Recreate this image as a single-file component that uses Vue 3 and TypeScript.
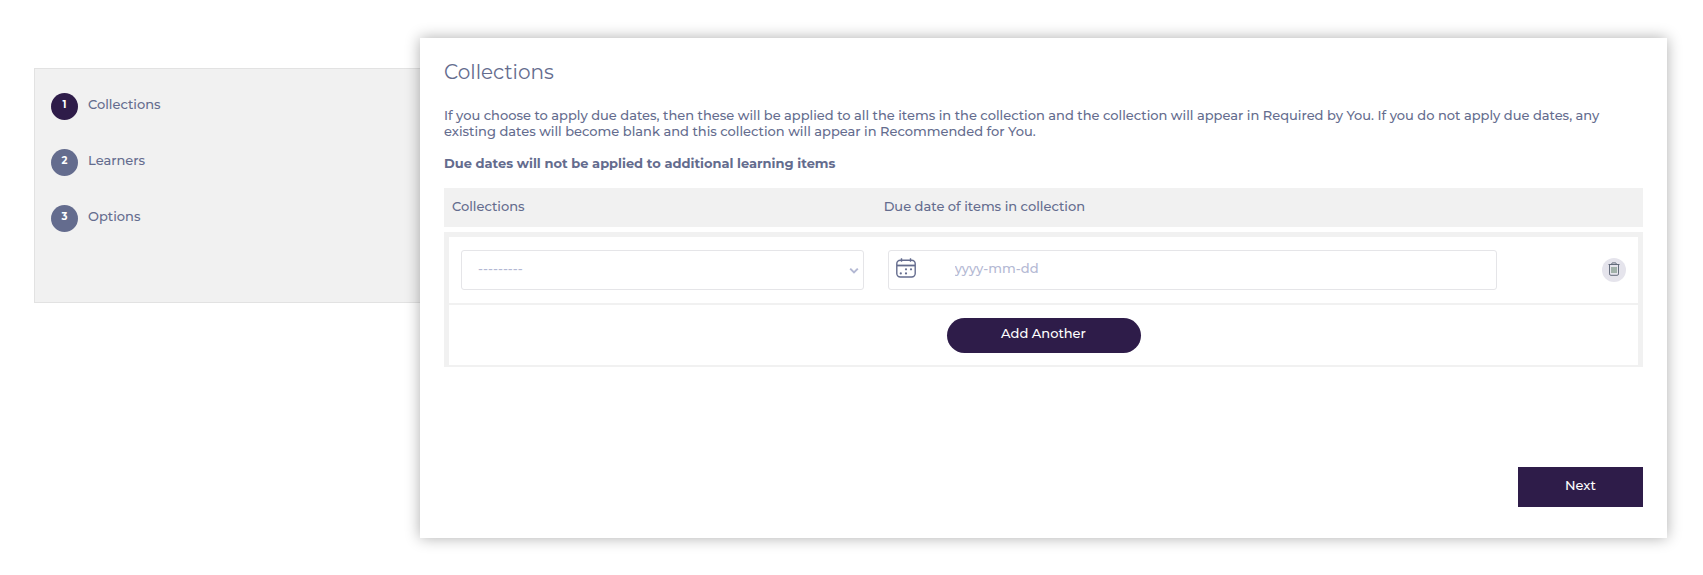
<script setup lang="ts">
import { ref } from 'vue'

interface Step {
  number: number
  label: string
}

interface CollectionRow {
  id: number
  collection: string
  dueDate: string
}

const steps: Step[] = [
  { number: 1, label: 'Collections' },
  { number: 2, label: 'Learners' },
  { number: 3, label: 'Options' },
]

const currentStep = ref(1)
const rows = ref<CollectionRow[]>([{ id: 1, collection: '', dueDate: '' }])
let nextId = 2

function addRow(): void {
  rows.value.push({ id: nextId++, collection: '', dueDate: '' })
}

function removeRow(id: number): void {
  rows.value = rows.value.filter((row) => row.id !== id)
}

function goNext(): void {
  currentStep.value = Math.min(currentStep.value + 1, steps.length)
}
</script>

<template>
  <div class="wizard">
    <nav class="steps" aria-label="Steps">
      <ol class="step-list">
        <li
          v-for="step in steps"
          :key="step.number"
          class="step"
          :class="{ active: step.number === currentStep }"
        >
          <span class="step-number">{{ step.number }}</span>
          <span class="step-label">{{ step.label }}</span>
        </li>
      </ol>
    </nav>

    <main class="panel">
      <h1 class="title">Collections</h1>
      <p class="intro">
        If you choose to apply due dates, then these will be applied to all the items in the
        collection and the collection will appear in Required by You. If you do not apply due
        dates, any existing dates will become blank and this collection will appear in Recommended
        for You.
      </p>
      <p class="note">Due dates will not be applied to additional learning items</p>

      <table class="collections">
        <thead>
          <tr>
            <th class="col-collection" scope="col">Collections</th>
            <th scope="col">Due date of items in collection</th>
            <td class="col-action"></td>
          </tr>
        </thead>
        <tbody>
          <tr v-for="row in rows" :key="row.id" class="entry">
            <td>
              <div class="field">
                <select v-model="row.collection" class="control" aria-label="Collection">
                  <option value="">---------</option>
                </select>
                <svg class="chevron" viewBox="0 0 10 8" aria-hidden="true">
                  <path d="M1.2 1.6 5 5.4 8.8 1.6" />
                </svg>
              </div>
            </td>
            <td>
              <div class="field">
                <input
                  v-model="row.dueDate"
                  class="control date"
                  type="text"
                  placeholder="yyyy-mm-dd"
                  aria-label="Due date"
                />
                <svg class="calendar" viewBox="0 0 20 20" aria-hidden="true">
                  <rect x="0.8" y="2.3" width="18.4" height="16.7" rx="3.5" />
                  <path class="bar" d="M1 7.5h18" />
                  <path d="M5.5 0.3v3.4M14.5 0.3v3.4" />
                  <g class="dots">
                    <circle cx="10" cy="11.3" r="1.1" />
                    <circle cx="15" cy="11.3" r="1.1" />
                    <circle cx="4.8" cy="15.4" r="1.1" />
                    <circle cx="10" cy="15.4" r="1.1" />
                  </g>
                </svg>
              </div>
            </td>
            <td class="action">
              <button class="remove" type="button" aria-label="Remove" @click="removeRow(row.id)">
                <svg viewBox="0 0 12 14" aria-hidden="true">
                  <path d="M0.5 2.5h11M3.5 2.3 4.2 0.9h3.6l0.7 1.4" />
                  <path d="M1.5 2.7v9.2q0 1.4 1.4 1.4h6.2q1.4 0 1.4-1.4V2.7" />
                  <path class="slats" d="M4 5v6M6 5v6M8 5v6" />
                </svg>
              </button>
            </td>
          </tr>
          <tr class="footer-row">
            <td colspan="3">
              <button class="add" type="button" @click="addRow">Add Another</button>
            </td>
          </tr>
        </tbody>
      </table>

      <div class="actions">
        <button class="next" type="button" @click="goNext">Next</button>
      </div>
    </main>
  </div>
</template>

<style>
body {
  margin: 0;
  background: #fff;
}
</style>

<style scoped>
.wizard {
  display: grid;
  grid-template-columns: 386px minmax(0, 1fr);
  align-items: start;
  padding: 38px 36px 36px 34px;
  color: #646c8e;
  font-family: Montserrat, Inter, sans-serif;
  font-size: 13px;
  font-weight: 500;
  line-height: 16px;
}

.steps {
  margin-top: 30px;
  padding: 24px 16px 70px;
  border: 1px solid #e2e2e2;
  border-right: 0;
  background: #f1f1f1;
}

.step-list {
  display: grid;
  gap: 29px;
  margin: 0;
  padding: 0;
  list-style: none;
}

.step {
  display: flex;
  align-items: center;
  gap: 10px;
}

.step-number {
  box-sizing: border-box;
  width: 27px;
  height: 27px;
  border-radius: 50%;
  background: #646c8e;
  color: #fff;
  font-size: 10px;
  font-weight: 700;
  line-height: 24px;
  text-align: center;
}

.step-label {
  padding-bottom: 6px;
}

.active .step-number {
  background: #2e1c49;
}

.panel {
  position: relative;
  padding: 22px 24px 31px;
  background: #fff;
  box-shadow: 0 0 14px rgba(0, 0, 0, 0.32);
}

.title {
  margin: 0 0 23px;
  font-size: 20px;
  font-weight: 400;
  line-height: 24px;
}

.intro {
  margin: 0 0 16px;
  padding-right: 24px;
}

.note {
  margin: 0 0 17px;
  font-weight: 700;
}

.collections {
  width: 100%;
  border-spacing: 0;
  table-layout: fixed;
}

.collections thead th,
.collections thead td {
  height: 16px;
  padding: 10px 8px 13px;
  border-bottom: 5px solid #fff;
  background: #f1f1f1;
  background-clip: padding-box;
  font-weight: 500;
  text-align: left;
}

.col-collection {
  width: 36%;
  box-sizing: border-box;
}

.collections .col-action {
  width: 118px;
}

.collections tbody td {
  padding: 13px 12px;
  border-bottom: 2px solid #f1f1f1;
}

.collections tbody tr:first-child td {
  border-top: 5px solid #f1f1f1;
}

.collections tbody td:first-child {
  border-left: 5px solid #f1f1f1;
}

.collections tbody td:last-child {
  border-right: 5px solid #f1f1f1;
}

.field {
  position: relative;
}

.control {
  display: block;
  box-sizing: border-box;
  width: 100%;
  height: 40px;
  padding: 0 16px 4px;
  border: 1px solid #e5e5e8;
  border-radius: 3px;
  appearance: none;
  background: #fff;
  color: #b3b8d3;
  font: inherit;
}

.date {
  padding-left: 66px;
  color: #646c8e;
}

.date::placeholder {
  color: #b3b8d3;
  opacity: 1;
}

.chevron {
  position: absolute;
  top: 17px;
  right: 5px;
  width: 10px;
  height: 8px;
  fill: none;
  stroke: #b3b8d3;
  stroke-width: 2;
  pointer-events: none;
}

.calendar {
  position: absolute;
  top: 8px;
  left: 8px;
  width: 20px;
  height: 20px;
  fill: none;
  stroke: #646c8e;
  stroke-width: 1.4;
  pointer-events: none;
}

.calendar .bar {
  stroke-width: 1.8;
}

.calendar .dots {
  fill: #646c8e;
  stroke: none;
}

.action {
  text-align: right;
}

.remove {
  display: inline-grid;
  place-items: center;
  width: 24px;
  height: 24px;
  padding: 0 0 2px;
  border: 0;
  border-radius: 50%;
  background: #e5e4ec;
  vertical-align: middle;
  cursor: pointer;
}

.remove svg {
  width: 12px;
  height: 14px;
  fill: none;
  stroke: #646c7c;
  stroke-width: 1;
}

.remove .slats {
  stroke: #5f8068;
}

.collections .footer-row td {
  padding-bottom: 12px;
  text-align: center;
}

.add,
.next {
  border: 0;
  background: #2e1c49;
  color: #fff;
  font: inherit;
  cursor: pointer;
}

.add {
  display: block;
  width: 194px;
  height: 35px;
  margin: 0 auto;
  padding: 0 0 6px;
  border-radius: 18px;
}

.actions {
  display: flex;
  justify-content: flex-end;
  margin-top: 100px;
}

.next {
  width: 125px;
  height: 40px;
  padding: 0 0 4px;
}
</style>
